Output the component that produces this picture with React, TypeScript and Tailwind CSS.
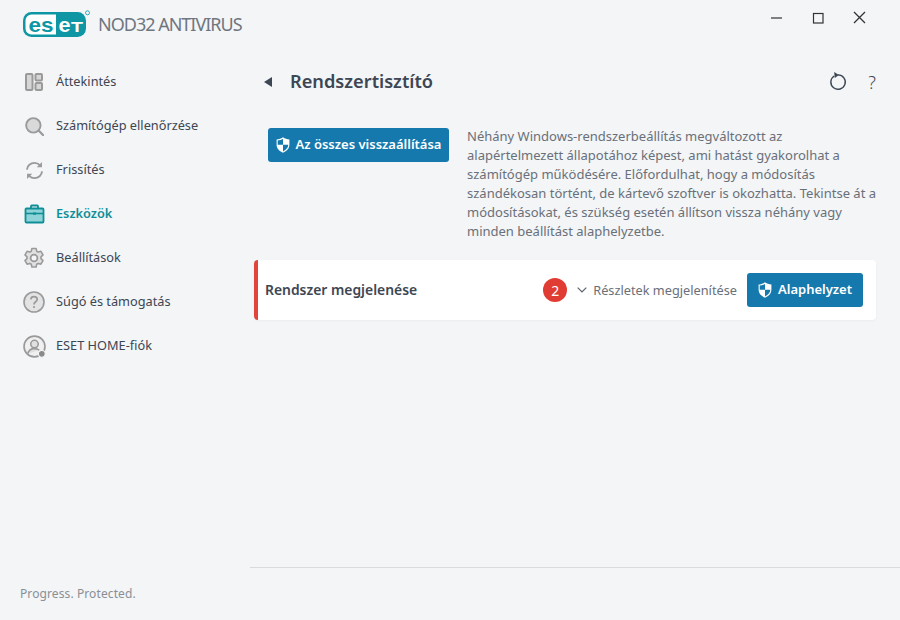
import React from "react";

const G = "#9a9a9a";

function IconOverview() {
  return (
    <svg width="18" height="18" viewBox="0 0 18 18" fill="#d6d6d6" stroke={G} strokeWidth="2">
      <rect x="1" y="1" width="6.5" height="16" rx="1" />
      <rect x="10.5" y="1" width="6.5" height="6.5" rx="1" />
      <rect x="10.5" y="10" width="6.5" height="7" rx="1" />
    </svg>
  );
}
function IconSearch() {
  return (
    <svg width="19" height="19" viewBox="0 0 20 20" fill="none">
      <circle cx="8.8" cy="8.8" r="7.6" fill="#d9d9d9" stroke={G} strokeWidth="2" />
      <path d="M14.5 14.5L19 19" stroke={G} strokeWidth="2.4" strokeLinecap="round" />
    </svg>
  );
}
function IconRefresh() {
  return (
    <svg width="19" height="19" viewBox="0 0 20 20" fill="none" stroke={G} strokeWidth="2">
      <path d="M2 9C2.5 5 5.8 2 10 2c2.2 0 4.2.9 5.6 2.4" />
      <path d="M18 11c-.5 4-3.8 7-8 7-2.2 0-4.2-.9-5.6-2.4" />
      <path d="M17.8 1v5.6h-5.4z" fill={G} stroke="none" />
      <path d="M2.2 19v-5.6h5.4z" fill={G} stroke="none" />
    </svg>
  );
}
function IconCase() {
  return (
    <svg width="21" height="20" viewBox="0 0 20 20" fill="none">
      <rect x="1" y="4.5" width="18" height="14" rx="1" fill="#8fd3d8" stroke="#0e8f98" strokeWidth="1.8" />
      <path d="M6.5 4.5V2.2c0-.4.3-.7.7-.7h5.6c.4 0 .7.3.7.7v2.3" stroke="#0e8f98" strokeWidth="1.8" />
      <path d="M1 9.5h18" stroke="#0e8f98" strokeWidth="1.6" />
      <path d="M8.5 8.5h3v2.2h-3z" fill="#0e8f98" />
    </svg>
  );
}
function IconGear() {
  return (
    <svg width="22" height="22" viewBox="0 0 22 22" fill="none">
      <path
        d="M8.9 1.5h4.2l.6 2.7 1.6.9 2.6-.8 2.1 3.6-2 1.9v1.9l2 1.9-2.1 3.6-2.6-.8-1.6.9-.6 2.7H8.9l-.6-2.7-1.6-.9-2.6.8-2.1-3.6 2-1.9v-1.9l-2-1.9 2.1-3.6 2.6.8 1.6-.9z"
        fill="#e0e0e0"
        stroke={G}
        strokeWidth="1.6"
        strokeLinejoin="round"
      />
      <circle cx="11" cy="11" r="3.4" fill="#f3f5f7" stroke={G} strokeWidth="1.8" />
    </svg>
  );
}
function IconHelp() {
  return (
    <svg width="22" height="22" viewBox="0 0 22 22" fill="none">
      <circle cx="11" cy="11" r="10" fill="#e3e3e3" stroke={G} strokeWidth="1.6" />
      <path d="M7.8 8.4C8 6.6 9.3 5.7 11 5.7c1.8 0 3.2 1.1 3.2 2.7 0 2.4-3.2 2.4-3.2 5" stroke={G} strokeWidth="1.7" />
      <circle cx="11" cy="16" r="1.1" fill={G} />
    </svg>
  );
}
function IconHome() {
  return (
    <svg width="23" height="23" viewBox="0 0 22 22" fill="none">
      <circle cx="11" cy="11" r="10" fill="#f0f0f0" stroke={G} strokeWidth="1.6" />
      <circle cx="11" cy="8.7" r="3.6" stroke={G} strokeWidth="1.5" fill="#e0e0e0" />
      <path d="M4.5 18c.8-3.5 3.4-5 6.5-5 2 0 3.5.5 4.6 1.6" stroke={G} strokeWidth="1.5" fill="#e0e0e0" />
      <circle cx="18" cy="18" r="3.2" fill="#8a8a8a" stroke="#f3f5f7" strokeWidth="1" />
    </svg>
  );
}
function Shield() {
  return (
    <svg width="14" height="16" viewBox="0 0 14 16">
      <path d="M7 .3C5 1.7 3 2.3.6 2.5v5.2c0 3.6 2.6 6.4 6.4 8 3.8-1.6 6.4-4.4 6.4-8V2.5C11 2.3 9 1.7 7 .3z" fill="#fff" />
      <path d="M7 1.9v5.9H1.7V3.5C3.6 3.3 5.4 2.8 7 1.9zM7 7.8h5.3c0 2.9-2.1 5-5.3 6.6z" fill="#1679ad" />
    </svg>
  );
}
function Logo() {
  const f = "'Liberation Sans',sans-serif";
  return (
    <svg width="68" height="27" viewBox="0 0 68 27" className="shrink-0">
      <rect x="0" y="2" width="63" height="25" rx="8.5" fill="#0f96a4" />
      <path d="M8.5 4.5H33V24.5H8.5A6 6 0 0 1 2.5 18.5V10.5A6 6 0 0 1 8.5 4.5z" fill="#fff" />
      <text x="5.5" y="22" fontFamily={f} fontWeight="700" fontSize="21" fill="#0f96a4" textLength="25" lengthAdjust="spacingAndGlyphs">es</text>
      <text x="35.5" y="22" fontFamily={f} fontWeight="700" fontSize="21" fill="#fff" textLength="12" lengthAdjust="spacingAndGlyphs">e</text>
      <text x="48" y="22" fontFamily={f} fontWeight="700" fontSize="15.5" fill="#fff" textLength="12" lengthAdjust="spacingAndGlyphs">T</text>
      <circle cx="64.5" cy="2.8" r="2" fill="none" stroke="#0f96a4" strokeWidth="0.8" />
    </svg>
  );
}

const items: { label: string; icon: React.ReactNode; active?: boolean }[] = [
  { label: "Áttekintés", icon: <IconOverview /> },
  { label: "Számítógép ellenőrzése", icon: <IconSearch /> },
  { label: "Frissítés", icon: <IconRefresh /> },
  { label: "Eszközök", icon: <IconCase />, active: true },
  { label: "Beállítások", icon: <IconGear /> },
  { label: "Súgó és támogatás", icon: <IconHelp /> },
  { label: "ESET HOME-fiók", icon: <IconHome /> },
];

export default function App() {
  return (
    <div
      className="w-[900px] h-[620px] bg-[#f3f5f7] flex flex-col overflow-hidden text-[#3d4653]"
      style={{ fontFamily: "'Noto Sans','Open Sans',sans-serif" }}
    >
      <header className="h-[60px] flex items-start shrink-0">
        <div className="flex items-start pl-[23px] pt-[10px] gap-[7px]">
          <Logo />
          <span className="text-[18px] tracking-[-1px] text-[#6f7680] leading-[30px] -mt-[1px]">NOD32 ANTIVIRUS</span>
        </div>
        <div className="ml-auto flex items-center pt-[11px] pr-[34px] gap-[29px]">
          <svg width="12" height="12" viewBox="0 0 12 12"><path d="M0 6h11" stroke="#333" strokeWidth="1.2" /></svg>
          <svg width="12" height="12" viewBox="0 0 12 12" fill="none"><rect x="1.5" y="1.5" width="9.5" height="9.5" stroke="#333" strokeWidth="1.2" /></svg>
          <svg width="13" height="13" viewBox="0 0 13 13"><path d="M1 1l11 11M12 1L1 12" stroke="#333" strokeWidth="1.3" /></svg>
        </div>
      </header>
      <div className="flex flex-1 min-h-0">
        <aside className="w-[250px] shrink-0 flex flex-col">
          <nav className="flex flex-col">
            {items.map((it) => (
              <div key={it.label} className="h-[44px] flex items-center">
                <div className="w-[44px] ml-[12px] shrink-0 flex justify-center">{it.icon}</div>
                <span className={`text-[12.75px] ${it.active ? "font-semibold text-[#0e8f98]" : "text-[#3d4653]"}`}>{it.label}</span>
              </div>
            ))}
          </nav>
          <div className="mt-auto pl-[20px] pb-[18px] text-[12px] leading-[16px] tracking-[0.1px] text-[#8a8f96]">Progress. Protected.</div>
        </aside>
        <main className="flex-1 flex flex-col min-w-0">
          <div className="h-[43px] flex items-center shrink-0">
            <svg width="8" height="10" viewBox="0 0 8 10" className="ml-[14px]"><path d="M8 0v10L0 5z" fill="#3d4653" /></svg>
            <h1 className="ml-[18px] text-[18.2px] font-semibold text-[#3d4653]">Rendszertisztító</h1>
            <div className="ml-auto flex items-center gap-[21px] pr-[24px]">
              <svg width="19" height="19" viewBox="0 0 20 20" fill="none">
                <path d="M6.5 4.2a7.6 7.6 0 1 0 4-1.2" stroke="#3d4653" strokeWidth="1.5" />
                <path d="M6.5 0l5 3.2-4.4 3.2z" fill="#3d4653" />
              </svg>
              <span className="text-[18px] leading-[20px] text-[#3d4653] font-light">?</span>
            </div>
          </div>
          <section className="flex items-start mt-[24px] pl-[18px] pr-[20px]">
            <button className="h-[34px] w-[181px] shrink-0 rounded-[3px] bg-[#1679ad] text-white text-[13px] font-semibold flex items-center justify-center gap-[6px] mt-[1px]">
              <Shield />
              Az összes visszaállítása
            </button>
            <p className="ml-[18px] text-[13px] leading-[19px] text-[#6a7079]">
              Néhány Windows-rendszerbeállítás megváltozott az alapértelmezett állapotához képest, ami hatást gyakorolhat a számítógép működésére. Előfordulhat, hogy a módosítás szándékosan történt, de kártevő szoftver is okozhatta. Tekintse át a módosításokat, és szükség esetén állítson vissza néhány vagy minden beállítást alaphelyzetbe.
            </p>
          </section>
          <section className="mt-[19px] ml-[4px] mr-[24px] h-[60px] bg-white rounded-[4px] border-l-[4px] border-[#e2443b] flex items-center pl-[7px] pr-[13px] shadow-[0_1px_3px_rgba(0,0,0,0.04)]">
            <span className="text-[13.9px] font-semibold text-[#3d4653] pt-[1px]">Rendszer megjelenése</span>
            <span className="ml-auto w-[24px] h-[24px] rounded-full bg-[#e03c34] text-white text-[14px] flex items-center justify-center">2</span>
            <svg width="10" height="6" viewBox="0 0 10 6" fill="none" className="ml-[10px]"><path d="M.7.7L5 5l4.3-4.3" stroke="#5a626c" strokeWidth="1.2" /></svg>
            <span className="ml-[6px] text-[12.75px] text-[#6a7079] pt-[1px]">Részletek megjelenítése</span>
            <button className="ml-[10px] h-[34px] w-[116px] rounded-[3px] bg-[#1679ad] text-white text-[13px] font-semibold flex items-center justify-center gap-[6px]">
              <Shield />
              Alaphelyzet
            </button>
          </section>
          <div className="mt-auto mb-[52px] border-t border-[#d9dcdf]" />
        </main>
      </div>
    </div>
  );
}
